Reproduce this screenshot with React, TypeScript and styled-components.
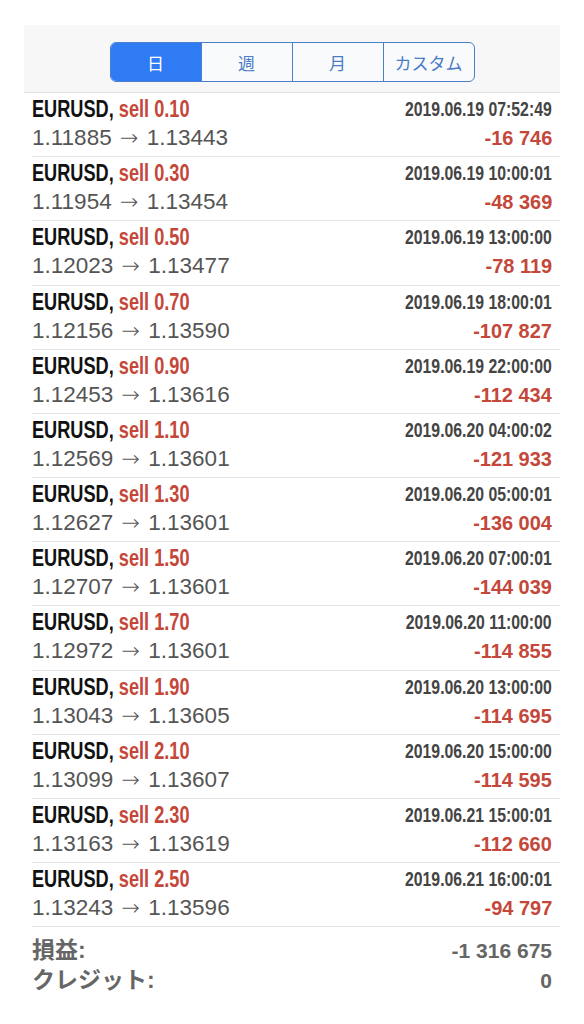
import React from "react";
import styled, { createGlobalStyle } from "styled-components";

const GlobalStyle = createGlobalStyle`
  html, body {
    margin: 0;
    padding: 0;
    background: #ffffff;
  }
  body {
    font-family: "Liberation Sans", Arial, sans-serif;
    -webkit-font-smoothing: antialiased;
  }
`;

const SANS = `"Liberation Sans", Arial, sans-serif`;
const JP = `"Liberation Sans", "Noto Sans CJK JP", sans-serif`;

const Page = styled.div`
  padding: 25px 24px 0;
  height: 1024px;
  box-sizing: border-box;
  overflow: hidden;
`;

const Header = styled.div`
  background: #f7f7f7;
  height: 68px;
  box-sizing: border-box;
  padding-top: 17px;
  border-bottom: 1px solid #e3e3e3;
  display: flex;
  justify-content: center;
  align-items: flex-start;
`;

const Segmented = styled.div`
  display: flex;
  height: 40px;
  box-sizing: border-box;
  border: 1px solid #4b7fcc;
  border-radius: 6px;
  overflow: hidden;
  background: #f9fafc;
`;

const Segment = styled.div<{ $active?: boolean }>`
  width: 90px;
  display: flex;
  align-items: center;
  justify-content: center;
  font-family: "Noto Sans CJK JP", sans-serif;
  font-size: 17px;
  font-weight: 400;
  color: ${(p) => (p.$active ? "#ffffff" : "#4b7cc6")};
  background: ${(p) => (p.$active ? "#2f7bf3" : "transparent")};
  & + & {
    border-left: 1px solid #4b7fcc;
  }
`;

const List = styled.div`
  display: flex;
  flex-direction: column;
`;

const Row = styled.div`
  margin-left: 8px;
  padding: 4px 8px 0 0;
  height: 64.18px;
  box-sizing: border-box;
  border-bottom: 1px solid #e4e4e4;
  display: flex;
  justify-content: space-between;
`;

const Col = styled.div<{ $right?: boolean }>`
  display: flex;
  flex-direction: column;
  align-items: ${(p) => (p.$right ? "flex-end" : "flex-start")};
`;

/* condensed bold text: the narrow face is not installed, so squeeze the bold face */
const Condensed = styled.div<{ $scale: number; $right?: boolean }>`
  display: inline-block;
  font-family: ${SANS};
  font-weight: 700;
  white-space: nowrap;
  transform: scaleX(${(p) => p.$scale});
  transform-origin: ${(p) => (p.$right ? "right" : "left")} center;
`;

const Title = styled(Condensed)`
  font-size: 23px;
  line-height: 24px;
  color: #111111;
`;

const Sell = styled.span`
  color: #c4473a;
`;

const Prices = styled.div`
  font-family: ${SANS};
  font-size: 22.5px;
  line-height: 24px;
  margin-top: 5px;
  color: #555555;
  white-space: nowrap;
`;

const Arrow = styled.span`
  font-family: "DejaVu Sans", sans-serif;
  font-weight: 300;
  font-size: 22px;
  margin: 0 2px;
`;

const DateText = styled(Condensed)`
  font-size: 20px;
  line-height: 24px;
  color: #444444;
`;

const Amount = styled(Condensed)`
  font-size: 21px;
  line-height: 24px;
  margin-top: 5px;
  color: #c4473a;
`;

const Summary = styled.div`
  padding: 8px 8px 0 8px;
  display: flex;
  flex-direction: column;
`;

const SummaryLine = styled.div`
  display: flex;
  justify-content: space-between;
  align-items: baseline;
  height: 30px;
  line-height: 30px;
`;

const Label = styled.span`
  font-family: ${JP};
  font-weight: 700;
  font-size: 23px;
  color: #666666;
`;

const Value = styled(Condensed)`
  font-size: 21px;
  color: #666666;
`;

type Deal = { lot: string; from: string; to: string; time: string; profit: string };

const deals: Deal[] = [
  { lot: "0.10", from: "1.11885", to: "1.13443", time: "2019.06.19 07:52:49", profit: "-16 746" },
  { lot: "0.30", from: "1.11954", to: "1.13454", time: "2019.06.19 10:00:01", profit: "-48 369" },
  { lot: "0.50", from: "1.12023", to: "1.13477", time: "2019.06.19 13:00:00", profit: "-78 119" },
  { lot: "0.70", from: "1.12156", to: "1.13590", time: "2019.06.19 18:00:01", profit: "-107 827" },
  { lot: "0.90", from: "1.12453", to: "1.13616", time: "2019.06.19 22:00:00", profit: "-112 434" },
  { lot: "1.10", from: "1.12569", to: "1.13601", time: "2019.06.20 04:00:02", profit: "-121 933" },
  { lot: "1.30", from: "1.12627", to: "1.13601", time: "2019.06.20 05:00:01", profit: "-136 004" },
  { lot: "1.50", from: "1.12707", to: "1.13601", time: "2019.06.20 07:00:01", profit: "-144 039" },
  { lot: "1.70", from: "1.12972", to: "1.13601", time: "2019.06.20 11:00:00", profit: "-114 855" },
  { lot: "1.90", from: "1.13043", to: "1.13605", time: "2019.06.20 13:00:00", profit: "-114 695" },
  { lot: "2.10", from: "1.13099", to: "1.13607", time: "2019.06.20 15:00:00", profit: "-114 595" },
  { lot: "2.30", from: "1.13163", to: "1.13619", time: "2019.06.21 15:00:01", profit: "-112 660" },
  { lot: "2.50", from: "1.13243", to: "1.13596", time: "2019.06.21 16:00:01", profit: "-94 797" },
];

export default function App() {
  return (
    <>
      <GlobalStyle />
      <Page>
        <Header>
          <Segmented>
            <Segment $active>日</Segment>
            <Segment>週</Segment>
            <Segment>月</Segment>
            <Segment>カスタム</Segment>
          </Segmented>
        </Header>
        <List>
          {deals.map((d) => (
            <Row key={d.time}>
              <Col>
                <Title $scale={0.79}>
                  EURUSD, <Sell>sell {d.lot}</Sell>
                </Title>
                <Prices>
                  {d.from} <Arrow>→</Arrow> {d.to}
                </Prices>
              </Col>
              <Col $right>
                <DateText $scale={0.79} $right>
                  {d.time}
                </DateText>
                <Amount $scale={0.95} $right>
                  {d.profit}
                </Amount>
              </Col>
            </Row>
          ))}
        </List>
        <Summary>
          <SummaryLine>
            <Label>損益:</Label>
            <Value $scale={1} $right>
              -1 316 675
            </Value>
          </SummaryLine>
          <SummaryLine>
            <Label>クレジット:</Label>
            <Value $scale={1} $right>
              0
            </Value>
          </SummaryLine>
        </Summary>
      </Page>
    </>
  );
}
